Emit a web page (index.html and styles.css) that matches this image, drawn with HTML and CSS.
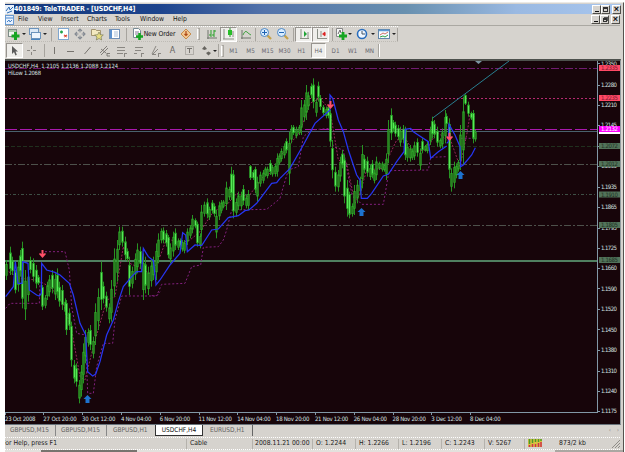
FILE: index.html
```html
<!DOCTYPE html>
<html lang="en">
<head>
<meta charset="utf-8">
<title>401849: TeleTRADER - [USDCHF,H4]</title>
<link rel="stylesheet" href="styles.css">
</head>
<body>
<div class="window">
  <header class="titlebar">
    <svg class="app-icon" width="9" height="9" viewBox="0 0 9 9"><rect width="9" height="9" fill="#e8f0fa"/><path d="M1 6L4 2L5 5L8 2M2 8L7 6" stroke="#2d6cb4" fill="none"/></svg>
    <h1>401849: TeleTRADER - [USDCHF,H4]</h1>
    <div class="controls"><i><b class="min"></b></i><i><b class="max"></b></i><i class="gap">×</i></div>
  </header>
  <nav class="menubar">
    <svg class="doc-icon" width="9" height="10" viewBox="0 0 9 10"><rect x=".5" y=".5" width="8" height="9" fill="#e9f2ff" stroke="#6a9bd2"/><path d="M1 3h7M2 7l2-2 1 2 2-2" stroke="#4683c8" fill="none"/></svg>
    <span class="m-file">File</span><span class="m-view">View</span><span class="m-insert">Insert</span><span class="m-charts">Charts</span><span class="m-tools">Tools</span><span class="m-window">Window</span><span>Help</span>
    <div class="controls"><i><b class="min"></b></i><i><b class="restore"></b></i><i class="gap">×</i></div>
  </nav>
  <div class="toolbar main-tools">
    <div class="slot w15"><svg width="14" height="14" viewBox="0 0 14 14"><rect x="1.500" y="2.500" width="8" height="7" fill="#f2f6f2" stroke="#7c8b86"/><path d="M2 4h7" stroke="#6ca06c"/><path d="M8.500 5v8M4.500 9h8" stroke="#16a522" stroke-width="3"/></svg></div>
    <div class="slot w6"><b class="drop"></b></div>
    <div class="slot w15"><svg width="14" height="14" viewBox="0 0 14 14"><rect x="1.500" y="1.500" width="9" height="6" fill="#dbe8f5" stroke="#6b93bb"/><rect x="3.500" y="5.500" width="9" height="6" fill="#eef5fc" stroke="#6b93bb"/><path d="M3 12.500h9" stroke="#4a84bd"/></svg></div>
    <div class="slot w6"><b class="drop"></b></div>
    <div class="slot w6"><b class="sep"></b></div>
    <div class="slot w17"><svg width="14" height="14" viewBox="0 0 14 14"><rect x="2.500" y="1.500" width="10" height="11" fill="#fff" stroke="#7fa6cf"/><path d="M4 5h3M5.500 3.500v3" stroke="#23a34a" stroke-width="1.500" fill="none"/><path d="M8 8l3 2M8 10l3-2" stroke="#e0503c" stroke-width="1.300"/></svg></div>
    <div class="slot w17"><svg width="14" height="14" viewBox="0 0 14 14"><path d="M7 2v10M2 7h10M5 4l2-2 2 2M5 10l2 2 2-2M4 5L2 7l2 2M10 5l2 2-2 2" stroke="#858b93" stroke-width="1.100" fill="none"/><circle cx="7" cy="7" r="1.800" fill="#d6d3ce"/></svg></div>
    <div class="slot w17"><svg width="14" height="14" viewBox="0 0 14 14"><path d="M1.500 2.500h4l1 1h4v5h-9z" fill="#f3e9c0" stroke="#92835a" stroke-width=".8"/><path d="M9 5l1.300 2.700 3 .3-2.300 2 .7 3L9 11.500 6.300 13l.7-3-2.300-2 3-.3z" fill="#e6dc82" stroke="#7b7e5a" stroke-width=".7"/></svg></div>
    <div class="slot w17"><svg width="14" height="14" viewBox="0 0 14 14"><rect x="2.500" y="2.500" width="10" height="9" fill="#fff" stroke="#6f8fb5"/><path d="M4 3v8" stroke="#5c92d0" stroke-width="2"/><path d="M7 5h4M7 7h4M7 9h4" stroke="#a6bdd6"/></svg></div>
    <div class="slot w8"><b class="sep"></b></div>
    <div class="slot order"><svg width="12" height="14" viewBox="0 0 12 14"><path d="M1.500 1.500h5l2 2v7h-7z" fill="#fff" stroke="#778a93"/><path d="M3 5h4M3 7h3" stroke="#879"/><path d="M7.500 6v7M4 9.500h7" stroke="#16a522" stroke-width="2.600"/></svg><span>New Order</span></div>
    <div class="slot w17"><svg width="14" height="14" viewBox="0 0 14 14"><path d="M7 2l5 5-5 5-5-5z" fill="#f2c893" stroke="#c88d4c"/><path d="M7 4v5M5.500 7L7 8.500 8.500 7" stroke="#ad4a18" stroke-width="1.200" fill="none"/></svg></div>
    <div class="slot w9"><b class="grip"></b></div>
    <div class="slot w17"><svg width="14" height="14" viewBox="0 0 14 14"><path d="M3 3v9M2 11h10" stroke="#70756c"/><path d="M6 3v7M4 8h2M9 3v7M9 4h2M7 8h2" stroke="#28a128"/></svg></div>
    <div class="slot w17 pressed"><svg width="14" height="14" viewBox="0 0 14 14"><path d="M2 2v10M1 12h11M11 4v6" stroke="#8a8f86"/><path d="M8 1v9" stroke="#269626"/><rect x="6" y="3" width="4" height="5" fill="#28bd28"/></svg></div>
    <div class="slot w17"><svg width="14" height="14" viewBox="0 0 14 14"><path d="M3 3v9M2 11h10" stroke="#70756c"/><path d="M4 8q2-5 4-3t4 3" stroke="#43a343" fill="none"/></svg></div>
    <div class="slot w3"><b class="sep"></b></div>
    <div class="slot w17"><svg width="14" height="14" viewBox="0 0 14 14"><path d="M8 8l4 4" stroke="#c5a24b" stroke-width="2.300"/><circle cx="5.500" cy="5.500" r="4" fill="#d9edff" stroke="#4f87c2"/><path d="M3 5.500h5M5.500 3v5" stroke="#1f65b5"/></svg></div>
    <div class="slot w17"><svg width="14" height="14" viewBox="0 0 14 14"><path d="M8 8l4 4" stroke="#c5a24b" stroke-width="2.300"/><circle cx="5.500" cy="5.500" r="4" fill="#d9edff" stroke="#4f87c2"/><path d="M3 5.500h5" stroke="#1f65b5"/></svg></div>
    <div class="slot w4"><b class="sep"></b></div>
    <div class="slot w17 pressed"><svg width="14" height="14" viewBox="0 0 14 14"><path d="M4 2v10M3 11.500h9M11 5v6" stroke="#8a8f86"/><path d="M7 4l3 3-3 3z" fill="#20a436"/></svg></div>
    <div class="slot w17 pressed"><svg width="14" height="14" viewBox="0 0 14 14"><path d="M3.500 2v10M3 11.500h10M7 4v6" stroke="#8a8f86"/><path d="M12 7H9M11 5L8.500 7l2.500 2z" stroke="#d22" stroke-width=".7" fill="#d22"/></svg></div>
    <div class="slot w6"><b class="sep"></b></div>
    <div class="slot w12"><svg width="12" height="14" viewBox="0 0 12 14"><path d="M1.500 1.500h6v8h-6z" fill="#f8f8f8" stroke="#878787"/><path d="M3 7l2-4 1 3" stroke="#666" fill="none"/><path d="M8 5v8M4 9h8" stroke="#16a522" stroke-width="2.800"/></svg></div>
    <div class="slot w6"><b class="drop"></b></div>
    <div class="slot w17"><svg width="14" height="14" viewBox="0 0 14 14"><circle cx="7" cy="7" r="4.500" fill="#f0f7ff" stroke="#2b6ebd" stroke-width="1.600"/><path d="M7 4v3h3" stroke="#456" fill="none"/></svg></div>
    <div class="slot w6"><b class="drop"></b></div>
    <div class="slot w15"><svg width="14" height="14" viewBox="0 0 14 14"><rect x="1.500" y="2.500" width="11" height="9" fill="#f4fbff" stroke="#6286aa"/><path d="M2 3.500h10" stroke="#5d98d6" stroke-width="1.500"/><path d="M3 8l3-2 2 1 3-2" stroke="#c64f43" stroke-width=".8" fill="none"/><path d="M3 10l3-1 2 1 3-2" stroke="#31a145" fill="none"/></svg></div>
    <div class="slot w6"><b class="drop"></b></div>
    <b class="sep"></b>
  </div>
  <div class="toolbar line-tools">
    <div class="slot w17 pressed"><svg width="13" height="13" viewBox="0 0 13 13"><path d="M4 2v8l2-2 1.500 3.500 1.300-.7L7.500 7.500H10z" fill="#5b5b5b"/></svg></div>
    <div class="slot w17"><svg width="13" height="13" viewBox="0 0 13 13"><path d="M6.500 2v3M6.500 8v3M2 6.500h3M8 6.500h3" stroke="#8a8782"/></svg></div>
    <div class="slot w8"><b class="sep"></b></div>
    <div class="slot w13"><svg width="13" height="13" viewBox="0 0 13 13"><path d="M6.500 3v7" stroke="#77746f"/></svg></div>
    <div class="slot w18"><svg width="13" height="13" viewBox="0 0 13 13"><path d="M3 7.500h7" stroke="#77746f"/></svg></div>
    <div class="slot w17"><svg width="13" height="13" viewBox="0 0 13 13"><path d="M3.500 10l6-7" stroke="#77746f"/></svg></div>
    <div class="slot w17"><svg width="13" height="13" viewBox="0 0 13 13"><path d="M2 9l7-7M3 11l7-7M3 5l5 4M9 9.500h3M9 12h3M9 9v3" stroke="#77746f" stroke-width=".9"/></svg></div>
    <div class="slot w17"><svg width="13" height="13" viewBox="0 0 13 13"><path d="M2 3.500h8M2 6.500h8M2 9.500h6M9.500 9v4M9 9.500h3" stroke="#8a8782"/></svg></div>
    <div class="slot w17"><svg width="13" height="13" viewBox="0 0 13 13"><path d="M3 3.500h8M3 6.500h6M2 9.500h3M9.500 9v4M9 9.500h3" stroke="#8a8782"/></svg></div>
    <div class="slot w17"><svg width="13" height="13" viewBox="0 0 13 13"><path d="M3 10l4-8M4 10l5-5M3 10.500h4M9.500 9v4M9 9.500h3" stroke="#8a8782" fill="none"/></svg></div>
    <div class="slot w17 glyph">A</div>
    <div class="slot w17"><svg width="13" height="13" viewBox="0 0 13 13"><path d="M2.500 2.500h8v8h-8z" stroke="#8a8782" stroke-dasharray="1 1" fill="none"/><path d="M4 4.500h5M6.500 4v5" stroke="#77746f"/></svg></div>
    <div class="slot w17"><svg width="13" height="13" viewBox="0 0 13 13"><path d="M2 5l2.500-3L7 5 4.500 6zM6 9l2.500 2.500L11 9 8.500 7.500z" fill="#66645f"/></svg></div>
    <div class="slot w6 tuck"><b class="drop"></b></div>
    <b class="sep"></b><div class="slot w6"><b class="grip"></b></div>
    <div class="tf">M1</div><div class="tf">M5</div><div class="tf">M15</div><div class="tf">M30</div><div class="tf">H1</div><div class="tf pressed">H4</div><div class="tf">D1</div><div class="tf">W1</div><div class="tf">MN</div>
    <b class="sep light"></b>
  </div>
  <main class="chart">
    <svg id="chart" width="616" height="364" viewBox="5 61 616 364">
      <g class="levels">
        <path class="purple" d="M5 68.500H597"/>
        <path class="rose" d="M5 98.500H597"/>
        <path class="magenta" d="M5 129.500H597"/>
        <path class="bid" d="M5 131.500H597"/>
        <path class="moss" d="M5 146.500H597"/>
        <path class="grey" d="M5 164.500H597M5 225.500H597"/>
        <path class="greydot" d="M5 194.500H597"/>
        <path class="support" d="M5 261H597"/>
      </g>
      <g id="series"></g>
      <path class="trend" d="M432.700 118L509 61"/>
      <g id="signals"></g>
      <path class="axis" d="M597.500 61V413M5 412.500H598"/>
      <path d="M475 61h7l-3.500 3z" fill="#7c97a4"/>
      <g id="scale"></g>
      <text class="info" x="8" y="68" textLength="110">USDCHF,H4&#160; 1.2105 1.2136 1.2088 1.2124</text>
      <text class="info" x="8" y="74.500" textLength="33">HiLow 1.2068</text>
    </svg>
  </main>
  <div class="tabs">
    <span class="t1">GBPUSD,M15</span><span class="t2">GBPUSD,M15</span><span class="t3">GBPUSD,H1</span><span class="active">USDCHF,H4</span><span class="t5">EURUSD,H1</span><em>‹&nbsp;&nbsp;&nbsp;›</em>
  </div>
  <footer class="status">
    <span class="help">For Help, press F1</span><span class="cable">Cable</span><span class="date">2008.11.21 00:00</span><span class="val">O: 1.2244</span><span class="val">H: 1.2266</span><span class="val">L: 1.2196</span><span class="val">C: 1.2243</span><span class="vol">V: 5267</span>
    <span class="net"><svg width="14" height="8" viewBox="0 0 14 8"><rect width="14" height="8" fill="#d8c040"/><path d="M1.500 0v5M4.500 0v4M7.500 0v3M10.500 0v3M13 0v2" stroke="#4b9b28" stroke-width="1.500"/><path d="M1.500 6v2M4.500 5v3M7.500 5v3M10.500 4v4M13 3v5" stroke="#d0304c" stroke-width="1.500"/></svg></span>
    <span class="kb">873/2 kb</span>
    <svg class="resize" width="9" height="9" viewBox="0 0 9 9"><path d="M0 9L9 0M3 9L9 3M6 9L9 6" stroke="#8f8d88"/></svg>
  </footer>
  <div class="under"><i class="left"></i><i class="right"></i></div>
</div>
<script src="chart.js"></script>
</body>
</html>
```
FILE: styles.css
```css
* { box-sizing: border-box; }
body { margin: 0; background: #fff; font-family: "DejaVu Sans Condensed", "DejaVu Sans", sans-serif; overflow: hidden; }
i, em { font-style: normal; }
svg { display: block; flex: none; }
.window { width: 619px; height: 450px; margin: 2px 0 0 5px; padding: 1px 3px 0 0; background: #d6d3ce; border-top: 1px solid #eceae6; border-right: 1px solid #55524e; display: flex; flex-direction: column; }
.titlebar { height: 10px; margin-right: -1px; background: linear-gradient(90deg, #14397d 0, #1d448d 25%, #5272aa 42%, #6890af 65%, #9ab9e2 83%, #a8c6ee 100%); display: flex; align-items: center; color: #fff; flex: none; }
.titlebar h1 { margin: 0; font: bold 7px/10px "DejaVu Sans Condensed", "DejaVu Sans", sans-serif; width: 122px; white-space: nowrap; letter-spacing: -.16px; }
.controls { margin-left: auto; display: flex; height: 9px; }
.controls i { width: 9px; height: 9px; background: #d6d3ce; border: 1px solid; border-color: #fff #504e49 #504e49 #fff; font: bold 9px/7px "Liberation Sans", sans-serif; color: #111; text-align: center; display: flex; justify-content: center; align-items: center; }
.controls .gap { margin-left: 2px; }
.controls b { display: block; width: 5px; height: 5px; }
.controls .min { border-bottom: 1px solid #111; width: 4px; }
.controls .max { border: 1px solid #333; border-top-width: 2px; }
.controls .restore { border: 1px solid #333; border-top-width: 2px; width: 4px; height: 4px; box-shadow: 1px -1px #555; }
.menubar { height: 12px; border-bottom: 1px solid #aaa8a2; display: flex; align-items: center; font-size: 6.800px; line-height: 11px; color: #151515; flex: none; }
.menubar span { white-space: nowrap; }
.m-file { width: 20px; margin-left: 4px; }
.m-view { width: 23px; }
.m-insert { width: 26px; }
.m-charts { width: 28px; }
.m-tools { width: 25px; }
.m-window { width: 33px; }
.toolbar { display: flex; align-items: center; flex: none; }
.main-tools { height: 16px; border-top: 1px dotted #fff; border-bottom: 1px dotted #bebbb5; padding-left: 1px; width: 393px; }
.line-tools { height: 17px; padding-left: 1px; }
.slot { height: 15px; display: flex; align-items: center; justify-content: center; flex: none; }
.w3 { width: 3px; } .w4 { width: 4px; } .w6 { width: 6px; } .w8 { width: 8px; } .w9 { width: 9px; } .w12 { width: 12px; } .w13 { width: 13px; } .w15 { width: 15px; } .w17 { width: 17px; } .w18 { width: 18px; }
.tuck { margin-left: -3px; }
.order { width: 47px; font-size: 6.800px; white-space: nowrap; letter-spacing: -.1px; color: #111; }
.drop { border: 2px solid transparent; border-top-color: #222; border-bottom: 0; }
.sep { width: 1px; height: 13px; background: #a7a49e; flex: none; }
.light { box-shadow: 1px 0 #fff; }
.grip { width: 3px; height: 12px; border: 1px solid #aaa7a1; border-left-color: #fff; }
.pressed { background: #efeeeb; border: 1px solid; border-color: #97948f #fff #fff #97948f; }
.glyph { font: 8px "DejaVu Sans", sans-serif; color: #66635f; }
.tf { width: 17px; height: 15px; font-size: 6.300px; display: flex; align-items: center; justify-content: center; color: #66666e; flex: none; }
.tf.pressed { width: 15px; margin: 0 1px; }
.chart { height: 366px; border-top: 2px solid #4d514d; margin-right: -1px; background: #17050a; flex: none; border-right: 1px solid #929c9f; border-bottom: 1px solid #69747c; }
.levels path { fill: none; stroke-width: 1; shape-rendering: crispEdges; }
.levels .purple { stroke: #701c70; stroke-dasharray: 8 2 2 2; }
.levels .rose { stroke: #b52a70; stroke-dasharray: 2 2; }
.levels .magenta { stroke: #a918ad; stroke-dasharray: 12 3; }
.levels .bid { stroke: #49616c; }
.levels .moss { stroke: #20301e; stroke-dasharray: 4 2; }
.levels .grey { stroke: #4d514b; stroke-dasharray: 7 2 2 2; }
.levels .greydot { stroke: #3e5046; stroke-dasharray: 3 2 1 2; }
.levels .support { stroke: #508060; stroke-width: 2; }
.wick { stroke: #279323; stroke-width: 1; }
.bull { fill: #287b20; stroke: #2eaa28; stroke-width: .7; }
.bear { fill: #65f465; stroke: #27b527; stroke-width: .7; }
.line { fill: none; vector-effect: non-scaling-stroke; }
.trail { stroke: #2636f2; stroke-width: 1.250; }
.band { stroke: #83207f; stroke-width: 1; stroke-dasharray: 2 2; }
.average { stroke: #a02b61; stroke-width: .9; stroke-dasharray: 2 1.500; }
.trend { stroke: #287f91; stroke-width: 1; }
.axis { fill: none; stroke: #8298a6; stroke-width: 1; }
text { font-family: "DejaVu Sans Condensed", "DejaVu Sans", sans-serif; font-size: 6px; fill: #d5e1e1; }
text.info { font-size: 5.800px; }
.on-red { fill: #7e1630; }
.on-green { fill: #203022; }
.on-magenta { fill: #fff; }
.tabs { height: 13px; display: flex; font-size: 6.500px; line-height: 11px; color: #63615f; border-bottom: 1px dotted #fff; flex: none; }
.tabs span { height: 11px; white-space: nowrap; }
.tabs .t1 { padding-left: 5px; width: 51px; border-right: 1px solid #888; margin-right: 5px; }
.tabs .t2 { width: 46px; border-right: 1px solid #888; margin-right: 6px; }
.tabs .t3 { width: 42px; }
.tabs .active { width: 48px; text-align: center; color: #111; background: #fff; border: 1px solid #333; border-top: 0; }
.tabs .t5 { padding-left: 7px; width: 50px; border-right: 1px solid #666; }
.tabs em { margin-left: auto; padding-right: 1px; color: #98958f; }
.status { height: 12px; display: flex; align-items: center; font-size: 6.800px; line-height: 9px; color: #222; border-bottom: 1px dotted #fff; overflow: hidden; flex: none; }
.status span { white-space: nowrap; flex: none; height: 10px; border-right: 1px solid #b5b2ac; padding-left: 3px; }
.status .help { width: 182px; padding: 0; text-indent: -3px; overflow: hidden; }
.status .cable { width: 66px; }
.status .date { width: 60px; padding-left: 2px; }
.status .val { width: 43px; }
.status .vol { width: 40px; }
.status .net { width: 21px; border: 0; }
.status .kb { border: 0; margin-left: 10px; }
.status .resize { margin-left: auto; margin-right: -1px; }
.under { height: 2px; background: #e3e1dd; display: flex; justify-content: space-between; margin-right: -3px; }
.under i { background: #77746f; width: 96px; }
.under .left { margin-left: 36px; }
.under .right { width: 68px; background: #aaa7a2; }
```
FILE: chart.js
```js
const NS = "http://www.w3.org/2000/svg";
function add(parent, tag, attrs, text) {
  const el = document.createElementNS(NS, tag);
  for (const k in attrs) el.setAttribute(k, attrs[k]);
  if (text) el.textContent = text;
  parent.appendChild(el);
  return el;
}

// Each strip has its own origin and uses units of a third of a pixel.
// Bars are "x high low", with "b" for a full falling body.
const strips = [
  { x: 0, y: 220,
    bars: "20 120 180,30 80 165,38 110 165,46 150 220 b,54 120 215,60 90 170,68 65 265 b,76 150 300,84 150 245,92 110 160,100 115 185,108 135 205,116 165 195,127 195 270 b,135 225 265,141 185 240,149 165 230,157 150 220,165 160 240,171 145 235,179 185 260,187 195 270,195 235 285,200 240 345 b,208 265 330,214 305 440 b,222 420 490,230 430 500,238 480 550,243 435 530,250 370 490,257 330 430,265 325 380,271 315 390,279 350 415,287 250 375,295 205 330,303 125 270,311 185 250,319 215 275,327 250 310,335 180 305,343 85 230,351 60 185,359 20 90,367 20 80,375 50 120,383 85 125,389 110 225,397 140 205,405 100 180,413 70 160,421 80 145,429 100 240,437 110 220,445 140 225,453 120 200,461 110 180,469 70 180",
    trail: ["17,230 40,200 46,125 54,190 66,190 68,125 84,130 88,210 110,225 118,228 124,220 125,130 140,150 165,157 180,165 208,190 220,225 240,310 257,345 263,455 278,468 287,462 300,425 320,345 340,300 355,245 370,200 395,170 410,155 425,155 430,85 445,110 460,122 468,190"],
    band: ["17,265 30,250 118,250 120,185", "135,95 195,95 208,150 215,260 230,340 257,345 263,520 280,520 290,440 310,370 338,370 345,300 365,228 470,228 480,215"],
    average: ["17,150 60,175 110,180 150,200 190,250 215,330 240,470 255,480 280,380 320,240 345,230 370,80 390,130 420,145 450,160 478,120"] },
  { x: 150, y: 150,
    bars: "26 250 340,33 235 280,41 232 280,49 240 290,55 255 325 b,62 280 340,70 245 320,76 235 300,84 265 300,92 265 295,98 270 305,104 270 310,112 235 285,120 225 265,128 195 250,136 205 235,142 215 290 b,150 250 295,155 165 260,163 155 200,171 145 205,178 170 210,186 150 190,194 160 200,200 180 265,207 155 210,214 150 190,221 150 175,229 95 180,237 110 150,243 50 150,250 60 205 b,258 145 200,265 125 180,273 125 180,280 105 165,288 135 175,294 120 180,301 45 90 b,309 60 90,317 50 130 b,323 80 155,331 65 110,339 60 100,345 50 80,352 50 85,360 30 75,367 45 80,375 40 80,381 10 80,389 10 45",
    trail: ["18,400 18,405 30,390 60,345 90,310 98,248 107,255 112,305 135,285 155,287 185,240 205,237 235,203 265,197 285,182 297,180 320,160 365,100 380,98 390,85"],
    band: ["5,437 20,437 35,403 105,400 125,350 152,345 160,292 205,290 220,270 230,240 245,180 350,178 385,150 390,145"],
    average: ["30,320 50,265 90,280 120,270 150,245 190,185 230,165 260,130 295,140 340,80 380,60"] },
  { x: 280, y: 60,
    bars: "4 265 305,12 250 295,20 235 280,28 215 375,33 195 250,41 195 225,49 200 235,57 195 225,64 120 225,72 120 185,78 75 180,86 95 150,94 70 115,100 55 145,108 115 170,115 65 125,122 105 150,130 135 165,138 140 175,146 135 175,152 150 260 b,158 240 355,166 320 395,174 330 395,180 290 365,188 270 325,194 285 430 b,202 360 470,208 395 475 b,216 430 470,224 375 465,232 360 430,240 350 405,246 255 385,254 285 340,262 290 350,270 315 360,276 300 355,284 330 370,290 290 360,298 305 330,306 305 335,314 310 335,320 280 360,326 180 310,333 145 240,341 180 215,347 185 230,354 195 240,362 200 260,370 195 250,376 200 300 b,382 250 305,390 255 305,398 265 300,404 245 300,412 235 290,420 265 330,428 235 280,436 255 275,442 245 280,450 200 255,458 170 235,464 180 235,472 200 260,480 235 265,488 205 265,496 150 250",
    trail: ["0,355 30,325 70,255 105,190 150,150 150,105 158,115 175,180 190,215 205,270 230,345 240,360 244,415 262,415 275,400 310,348 325,343 350,305 372,275 376,208 392,205 400,215 445,245 452,295 475,275 500,258"],
    band: ["0,415 10,380 25,330 55,320 70,230 95,210 150,205 160,260 190,270 215,400 245,433 310,433 325,345 330,332 445,330 452,292 500,290"],
    average: ["0,290 60,215 90,130 120,115 150,150 175,300 200,310 225,430 240,400 260,330 310,325 350,240 376,235 400,275 440,270 470,215 500,240"] },
  { x: 440, y: 55,
    bars: "20 175 215,27 190 370 b,35 340 410,42 320 400,48 325 370,56 315 350,62 210 345,70 125 330,77 118 150 b,85 140 185,93 170 195,100 165 265 b,107 225 260",
    trail: ["20,265 25,260 27,208 45,240 60,275 62,335 70,330 95,300 106,278"],
    band: ["62,250 106,250"],
    average: ["20,250 30,250 60,335 80,240 90,180 105,185"] }
];

const series = document.getElementById("series");
for (const s of strips) {
  const g = add(series, "g", { transform: `translate(${s.x} ${s.y}) scale(.33333)` });
  for (const kind of ["band", "average"])
    for (const points of s[kind]) add(g, "polyline", { class: "line " + kind, points });
  const bars = s.bars.split(",").map(b => b.split(" "));
  bars.forEach(([x, hi, lo, full], i) => {
    const px = Math.floor(s.x + x / 3) + .5;
    const top = s.y + hi / 3, height = (lo - hi) / 3;
    const next = bars[i + 1];
    const falling = full || (next && +next[1] + +next[2] > +hi + +lo + 6);
    add(series, "path", { class: "wick", d: `M${px} ${top}v${height}` });
    add(series, "rect", { class: falling ? "bear" : "bull", x: px - .75, width: 1.5,
      y: top + height * (full ? .1 : .22), height: height * (full ? .75 : .56) });
  });
}
for (const s of strips) {
  const g = add(series, "g", { transform: `translate(${s.x} ${s.y}) scale(.33333)` });
  for (const points of s.trail) add(g, "polyline", { class: "line trail", points });
}

const signals = document.getElementById("signals");
for (const [x, y, up] of [[42, 254, 0], [330, 105, 0], [449, 137, 0], [87, 399, 1], [361, 212, 1], [460, 175, 1]])
  add(signals, "path", { transform: `translate(${x + .5} ${y}) scale(1 ${up ? 1 : -1})`, d: up ? "M0-4L4 0H2V4H-2V0H-4Z" : "M0-4L3.5 0L2.5 1L1 0V4H-1V0L-2.5 1L-3.5 0Z", fill: up ? "#1d72cf" : "#ff5068" });

const scale = document.getElementById("scale");
const prices = [[63.5, "1.2350"], [85, "1.2280"], [105, "1.2210"], [125, "1.2145"], [146, "1.2075"], [166, "1.2005"], [187, "1.1935"], [207, "1.1865"], [228, "1.1795"], [248, "1.1725"], [268, "1.1660"], [288.5, "1.1590"], [309, "1.1520"], [329.5, "1.1450"], [350, "1.1380"], [371, "1.1310"], [391, "1.1240"], [411, "1.1175"]];
for (const [y, t] of prices) {
  add(scale, "path", { class: "axis", d: `M597 ${Math.floor(y) + .5}h3` });
  add(scale, "text", { x: 601, y: y + 2.3, textLength: 16 }, t);
}
add(scale, "rect", { x: 599, y: 130, width: 21, height: 4, fill: "#fff" });
for (const [y, t, fill, cls] of [[68, "1.2335", "#ff4965", "on-red"], [98, "1.2235", "#ff4965", "on-red"], [129, "1.2132", "#ff00ff", "on-magenta"], [146, "1.2072", "#52735a", "on-green"], [164, "1.2012", "#52735a", "on-green"], [194.5, "1.1910", "#52735a", "on-green"], [225, "1.1805", "#52735a", "on-green"], [260, "1.1685", "#52735a", "on-green"]]) {
  add(scale, "rect", { x: 599, y: y - 3, width: 21, height: 6, fill });
  add(scale, "text", { x: 601, y: y + 2.2, textLength: 17, class: cls }, t);
}
["23 Oct 2008", "27 Oct 20:00", "30 Oct 12:00", "4 Nov 04:00", "6 Nov 20:00", "11 Nov 12:00", "14 Nov 04:00", "18 Nov 20:00", "21 Nov 12:00", "26 Nov 04:00", "28 Nov 20:00", "3 Dec 12:00", "8 Dec 04:00"].forEach((t, i) => {
  const x = 5 + i * 38.8;
  add(scale, "path", { class: "axis", d: `M${Math.floor(x) + .5} 412v3` });
  add(scale, "text", { x: i ? x - .5 : 5, y: 420.5, textLength: t.length * 2.82 - .5 }, t);
});
```
